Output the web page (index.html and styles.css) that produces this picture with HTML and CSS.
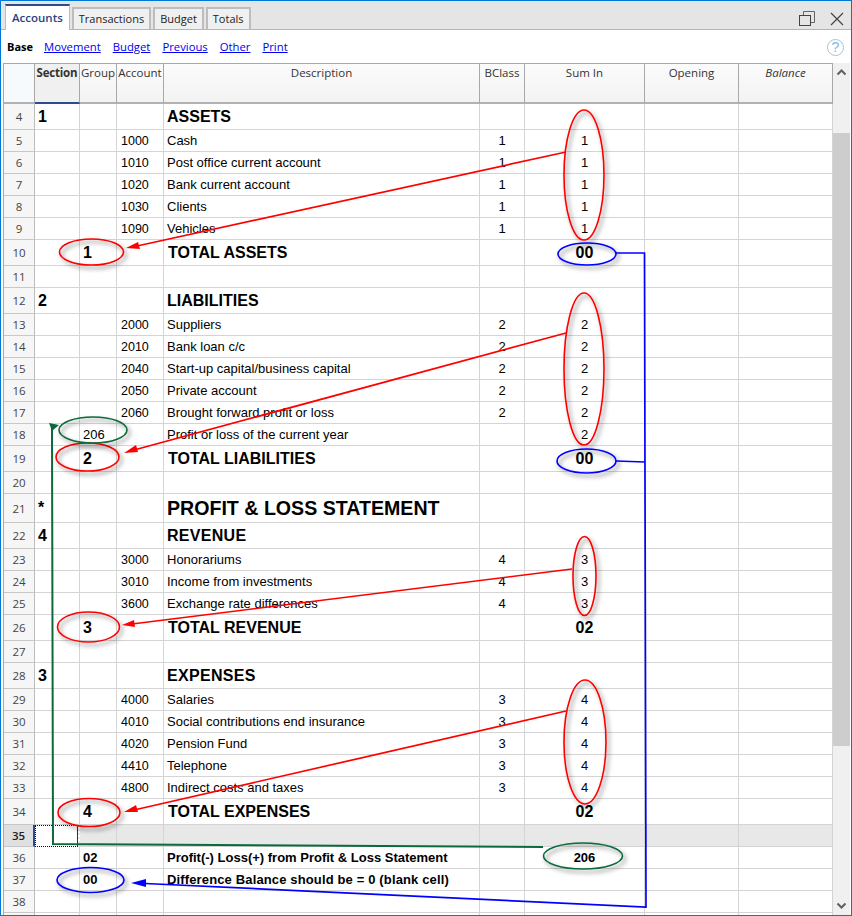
FILE: index.html
```html
<!DOCTYPE html>
<html lang="en">
<head>
<meta charset="utf-8">
<title>Accounts</title>
<link rel="stylesheet" href="styles.css">
</head>
<body>
<div class="window">
  <div class="tabbar">
    <div class="tab active">Accounts</div>
    <div class="tab">Transactions</div>
    <div class="tab">Budget</div>
    <div class="tab">Totals</div>
    <div class="win-buttons">
      <svg class="ic-restore" width="16" height="15" viewBox="0 0 16 15"><path d="M4.5 4V.5h11v11H11.5" fill="none" stroke="#666"/><rect x=".5" y="4.5" width="11" height="10" fill="none" stroke="#444"/></svg>
      <svg class="ic-close" width="14" height="14" viewBox="0 0 14 14"><path d="M1 1l12 12M13 1L1 13" fill="none" stroke="#444" stroke-width="1.2"/></svg>
    </div>
  </div>
  <div class="toolbar">
    <span class="current">Base</span>
    <a href="#">Movement</a>
    <a href="#">Budget</a>
    <a href="#">Previous</a>
    <a href="#">Other</a>
    <a href="#">Print</a>
    <span class="help">?</span>
  </div>
  <div class="grid-area">
    <div class="table">
      <div class="row head">
        <div class="corner"></div><div class="sorted">Section</div><div>Group</div><div>Account</div><div>Description</div><div>BClass</div><div>Sum In</div><div>Opening</div><div class="ital">Balance</div>
      </div>
      <div class="row tall"><div>4</div><div class="big">1</div><div></div><div></div><div class="big">ASSETS</div><div></div><div></div><div></div><div></div></div>
      <div class="row"><div>5</div><div></div><div></div><div>1000</div><div>Cash</div><div>1</div><div>1</div><div></div><div></div></div>
      <div class="row"><div>6</div><div></div><div></div><div>1010</div><div>Post office current account</div><div>1</div><div>1</div><div></div><div></div></div>
      <div class="row"><div>7</div><div></div><div></div><div>1020</div><div>Bank current account</div><div>1</div><div>1</div><div></div><div></div></div>
      <div class="row"><div>8</div><div></div><div></div><div>1030</div><div>Clients</div><div>1</div><div>1</div><div></div><div></div></div>
      <div class="row"><div>9</div><div></div><div></div><div>1090</div><div>Vehicles</div><div>1</div><div>1</div><div></div><div></div></div>
      <div class="row tall"><div>10</div><div></div><div class="big">1</div><div></div><div class="big total">TOTAL ASSETS</div><div></div><div class="big">00</div><div></div><div></div></div>
      <div class="row"><div>11</div><div></div><div></div><div></div><div></div><div></div><div></div><div></div><div></div></div>
      <div class="row tall"><div>12</div><div class="big">2</div><div></div><div></div><div class="big">LIABILITIES</div><div></div><div></div><div></div><div></div></div>
      <div class="row"><div>13</div><div></div><div></div><div>2000</div><div>Suppliers</div><div>2</div><div>2</div><div></div><div></div></div>
      <div class="row"><div>14</div><div></div><div></div><div>2010</div><div>Bank loan c/c</div><div>2</div><div>2</div><div></div><div></div></div>
      <div class="row"><div>15</div><div></div><div></div><div>2040</div><div>Start-up capital/business capital</div><div>2</div><div>2</div><div></div><div></div></div>
      <div class="row"><div>16</div><div></div><div></div><div>2050</div><div>Private account</div><div>2</div><div>2</div><div></div><div></div></div>
      <div class="row"><div>17</div><div></div><div></div><div>2060</div><div>Brought forward profit or loss</div><div>2</div><div>2</div><div></div><div></div></div>
      <div class="row"><div>18</div><div></div><div>206</div><div></div><div>Profit or loss of the current year</div><div></div><div>2</div><div></div><div></div></div>
      <div class="row tall"><div>19</div><div></div><div class="big">2</div><div></div><div class="big total">TOTAL LIABILITIES</div><div></div><div class="big">00</div><div></div><div></div></div>
      <div class="row"><div>20</div><div></div><div></div><div></div><div></div><div></div><div></div><div></div><div></div></div>
      <div class="row title"><div>21</div><div class="big">*</div><div></div><div></div><div class="huge">PROFIT &amp; LOSS STATEMENT</div><div></div><div></div><div></div><div></div></div>
      <div class="row tall"><div>22</div><div class="big">4</div><div></div><div></div><div class="big wide">REVENUE</div><div></div><div></div><div></div><div></div></div>
      <div class="row"><div>23</div><div></div><div></div><div>3000</div><div>Honorariums</div><div>4</div><div>3</div><div></div><div></div></div>
      <div class="row"><div>24</div><div></div><div></div><div>3010</div><div>Income from investments</div><div>4</div><div>3</div><div></div><div></div></div>
      <div class="row"><div>25</div><div></div><div></div><div>3600</div><div>Exchange rate differences</div><div>4</div><div>3</div><div></div><div></div></div>
      <div class="row tall"><div>26</div><div></div><div class="big">3</div><div></div><div class="big total">TOTAL REVENUE</div><div></div><div class="big">02</div><div></div><div></div></div>
      <div class="row"><div>27</div><div></div><div></div><div></div><div></div><div></div><div></div><div></div><div></div></div>
      <div class="row tall"><div>28</div><div class="big">3</div><div></div><div></div><div class="big wide">EXPENSES</div><div></div><div></div><div></div><div></div></div>
      <div class="row"><div>29</div><div></div><div></div><div>4000</div><div>Salaries</div><div>3</div><div>4</div><div></div><div></div></div>
      <div class="row"><div>30</div><div></div><div></div><div>4010</div><div>Social contributions end insurance</div><div>3</div><div>4</div><div></div><div></div></div>
      <div class="row"><div>31</div><div></div><div></div><div>4020</div><div>Pension Fund</div><div>3</div><div>4</div><div></div><div></div></div>
      <div class="row"><div>32</div><div></div><div></div><div>4410</div><div>Telephone</div><div>3</div><div>4</div><div></div><div></div></div>
      <div class="row"><div>33</div><div></div><div></div><div>4800</div><div>Indirect costs and taxes</div><div>3</div><div>4</div><div></div><div></div></div>
      <div class="row tall"><div>34</div><div></div><div class="big">4</div><div></div><div class="big total">TOTAL EXPENSES</div><div></div><div class="big">02</div><div></div><div></div></div>
      <div class="row selected"><div>35</div><div class="cursor"></div><div></div><div></div><div></div><div></div><div></div><div></div><div></div></div>
      <div class="row"><div>36</div><div></div><div class="strong">02</div><div></div><div class="strong">Profit(-) Loss(+) from Profit &amp; Loss Statement</div><div></div><div class="strong">206</div><div></div><div></div></div>
      <div class="row"><div>37</div><div></div><div class="strong">00</div><div></div><div class="strong loose">Difference Balance should be = 0 (blank cell)</div><div></div><div></div><div></div><div></div></div>
      <div class="row"><div>38</div><div></div><div></div><div></div><div></div><div></div><div></div><div></div><div></div></div>
      <div class="row"><div></div><div></div><div></div><div></div><div></div><div></div><div></div><div></div><div></div></div>
    </div>
    <div class="scrollbar">
      <svg class="sb-arrow" width="17" height="18" viewBox="0 0 17 18"><path d="M4.5 11.5l4-4 4 4" fill="none" stroke="#606060" stroke-width="2"/></svg>
      <div class="sb-track"><div class="sb-thumb"></div></div>
      <svg class="sb-arrow" width="17" height="18" viewBox="0 0 17 18"><path d="M4.5 6.5l4 4 4-4" fill="none" stroke="#606060" stroke-width="2"/></svg>
    </div>
  </div>
  <svg class="notes" width="852" height="916" viewBox="0 0 852 916">
    <defs>
      <filter id="soft" x="-30%" y="-30%" width="170%" height="170%"><feDropShadow dx="2.5" dy="3" stdDeviation="2" flood-color="#000" flood-opacity=".5"/></filter>
    </defs>
    <g class="oval red" filter="url(#soft)">
      <ellipse cx="584" cy="175" rx="20" ry="65"/>
      <ellipse cx="91.5" cy="252" rx="32" ry="13"/>
      <ellipse cx="584" cy="369" rx="20" ry="76"/>
      <ellipse cx="87.5" cy="457" rx="31.5" ry="14"/>
      <ellipse cx="584.5" cy="576" rx="11.5" ry="39.5"/>
      <ellipse cx="88.5" cy="627" rx="31" ry="15"/>
      <ellipse cx="585" cy="742" rx="21" ry="62"/>
      <ellipse cx="89" cy="812.5" rx="31" ry="14"/>
    </g>
    <g class="oval blue" filter="url(#soft)">
      <ellipse cx="587" cy="254" rx="29" ry="11"/>
      <ellipse cx="586.5" cy="461" rx="29.5" ry="12"/>
      <ellipse cx="90.5" cy="880" rx="33.5" ry="12.5"/>
    </g>
    <g class="oval green" filter="url(#soft)">
      <ellipse cx="93" cy="430" rx="34" ry="13"/>
      <ellipse cx="583" cy="856" rx="39.5" ry="13"/>
    </g>
    <g class="lines red">
      <path d="M566 152L137 246"/>
      <path d="M566 333L134 450"/>
      <path d="M572 569L132 624"/>
      <path d="M566 711L134 810"/>
    </g>
    <g class="heads red">
      <polygon points="126,248 138,242 140,249"/>
      <polygon points="124,453 136,445 138,452"/>
      <polygon points="122,625 134,620 135,627"/>
      <polygon points="124,812 136,805 138,812"/>
    </g>
    <path class="lines blue" d="M616 253H644.5L646 907L145 883.5M616 461L645 462"/>
    <polygon class="heads blue" points="131,883 146,879 146,887"/>
    <path class="lines green" d="M52 428L53 844L543 847"/>
    <polygon class="heads green" points="49,423 59,425 52,431"/>
  </svg>
</div>
</body>
</html>
```
FILE: styles.css
```css
* { box-sizing: border-box; }
html, body { margin: 0; padding: 0; }
body { width: 852px; height: 916px; overflow: hidden; background: #fff; }

.window {
  position: relative;
  width: 852px;
  height: 916px;
  border: 1px solid #0078d7;
  display: flex;
  flex-direction: column;
  background: #fff;
  font-family: "Open Sans", "Noto Sans", sans-serif;
  font-size: 11.5px;
  color: #222;
}

.tabbar {
  height: 29px;
  flex: none;
  display: flex;
  align-items: flex-end;
  gap: 2px;
  padding-left: 4px;
  background: #e5e5e5;
  border-bottom: 1px solid #b4b4b4;
}
.tab {
  height: 23px;
  margin-bottom: -1px;
  padding: 0 5px 2px;
  display: flex;
  align-items: center;
  background: #f0f0f0;
  border: 2px solid #bdbdbd;
  border-bottom: 1px solid #b4b4b4;
  font-size: 11px;
}
.tab.active {
  height: 26px;
  padding: 0 6px 2px;
  background: #fff;
  color: #2d3f7f;
  font-size: 11.5px;
  font-weight: 600;
  border: 0 solid #bdbdbd;
  border-top: 2px solid #2e4a93;
  border-right-width: 1px;
  border-left-width: 1px;
}
.win-buttons {
  margin-left: auto;
  align-self: flex-start;
  display: flex;
  align-items: flex-start;
  gap: 15px;
  padding: 10px 7px 0 0;
}
.ic-close { margin-top: 1px; }

.toolbar {
  height: 33px;
  flex: none;
  display: flex;
  align-items: center;
  gap: 12px;
  padding: 0 7px 1px 6px;
  font-size: 11.3px;
}
.toolbar .current { font-weight: 700; color: #000; font-size: 11px; margin-right: -1px; }
.toolbar a { color: #0000ee; text-decoration: underline; }
.help {
  margin-left: auto;
  margin-top: 2px;
  width: 17px;
  height: 17px;
  border: 1px solid #96c8ea;
  border-radius: 50%;
  color: #7db9e3;
  font: 14px/15px "Liberation Sans", sans-serif;
  text-align: center;
}

.grid-area {
  flex: 1;
  min-height: 0;
  display: flex;
  padding-left: 2px;
  overflow: hidden;
}
.table {
  width: 830px;
  flex: none;
  border-top: 1px solid #a8a8a8;
  border-left: 1px solid #a8a8a8;
  overflow: hidden;
  font-family: "Liberation Sans", Arial, sans-serif;
  font-size: 13px;
  color: #000;
}

.row {
  display: grid;
  grid-template-columns: 31px 45px 37px 47px 316px 45px 120px 94px 94px;
  height: 22px;
}
.row.tall { height: 26px; }
.row.title { height: 29px; }
.row > div {
  border-right: 1px solid #d4d4d4;
  border-bottom: 1px solid #d4d4d4;
  display: flex;
  align-items: center;
  white-space: nowrap;
  min-width: 0;
}
.row > div:nth-child(1) {
  justify-content: center;
  background: #f6f6f6;
  border-right-color: #bcbcbc;
  border-bottom-color: #c8c8c8;
  color: #444;
  font-family: "Open Sans", sans-serif;
  font-size: 11.5px;
}
.row > div:nth-child(2), .row > div:nth-child(3) { padding-left: 3px; }
.row > div:nth-child(4) { padding-left: 4px; font-size: 12.5px; }
.row > div:nth-child(5) { padding-left: 3px; }
.row > div:nth-child(6), .row > div:nth-child(7) { justify-content: center; }
.row > div.total { padding-left: 4px; }

.big { font-weight: 700; font-size: 16px; }
.wide { letter-spacing: .3px; }
.huge { font-weight: 700; font-size: 19.6px; }
.strong { font-weight: 700; font-size: 13px; }
.loose { letter-spacing: .14px; }

.row.head { height: 40px; }
.row.head > div {
  align-items: flex-start;
  justify-content: center;
  padding: 1px 0 0;
  background: linear-gradient(#fbfbfb, #f3f3f3);
  border-right: 1px solid #a8a8a8;
  border-bottom: 2px solid #b2b2b2;
  font-family: "Open Sans", sans-serif;
  font-size: 11.5px;
  color: #333;
}
.row.head > .corner { background: #f6fafd; }
.row.head > .sorted {
  background: #f0f0f0;
  font-weight: 700;
  border-bottom-color: #2e4a93;
  letter-spacing: -.2px;
}
.row.head > .ital { font-style: italic; }

.row.selected > div { background: #e8e8e8; }
.row.selected > div:nth-child(1) {
  background: #e0e0e0;
  color: #222;
  font-weight: 600;
  border-right: 2px solid #2e4a93;
}
.row.selected > .cursor {
  background: #fff;
  border: 1px dotted #111;
  border-right-width: 2px;
  border-right-color: #e8e8e8;
  box-shadow: inset -1px 0 0 #333;
}

.scrollbar {
  width: 17px;
  flex: none;
  display: flex;
  flex-direction: column;
  background: #f0f0f0;
}
.sb-arrow { flex: none; }
.sb-track { flex: 1; padding-top: 52px; }
.sb-thumb { height: 613px; background: #cdcdcd; }

.notes {
  position: absolute;
  left: -1px;
  top: -1px;
  pointer-events: none;
}
.oval { fill: none; stroke-width: 1.6; }
.oval.red { stroke: #ff0000; }
.oval.blue { stroke: #0000ff; }
.oval.green { stroke: #0b6a3a; }
.lines { fill: none; stroke-width: 1.7; }
.lines.red { stroke: #ff0000; }
.lines.blue { stroke: #0000ff; }
.lines.green { stroke: #0b6a3a; stroke-width: 2; }
.heads.red { fill: #ff0000; }
.heads.blue { fill: #0000ff; }
.heads.green { fill: #0b6a3a; }
```
